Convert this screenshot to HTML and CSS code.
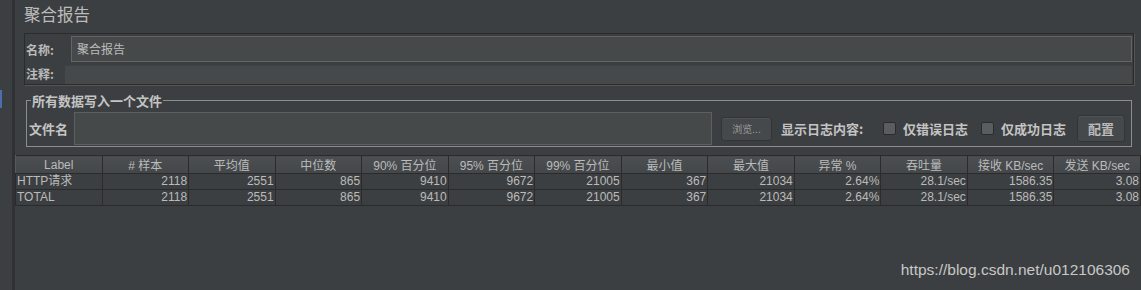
FILE: index.html
```html
<!DOCTYPE html>
<html lang="zh">

<head>
    <meta charset="UTF-8" />
    <meta name="viewport" content="width=device-width, initial-scale=1.0" />
    <title>聚合报告</title>
    <link rel="stylesheet" href="styles.css">
</head>

<body>
    <div class="app">
        <!-- 左侧树面板边缘 -->
        <div class="side">
            <span class="side-mark"></span>
        </div>
        <div class="main">
            <h1 class="title">聚合报告</h1>
            <!-- 名称 / 注释 -->
            <div class="info">
                <div class="info-row">
                    <label class="name-label">名称:</label>
                    <div class="field name-field">聚合报告</div>
                </div>
                <div class="info-row">
                    <label class="note-label">注释:</label>
                    <div class="field note-field"></div>
                </div>
            </div>
            <!-- 写入文件 -->
            <fieldset class="file-group">
                <legend>所有数据写入一个文件</legend>
                <div class="file-row">
                    <label class="file-label">文件名</label>
                    <div class="field file-field"></div>
                    <button class="btn btn-browse">浏览...</button>
                    <span class="log-title">显示日志内容:</span>
                    <span class="check"></span>
                    <span class="check-text">仅错误日志</span>
                    <span class="check"></span>
                    <span class="check-text">仅成功日志</span>
                    <button class="btn btn-config">配置</button>
                </div>
            </fieldset>
            <!-- 结果表格 -->
            <table class="result">
                <thead>
                    <tr>
                        <th>Label</th>
                        <th># 样本</th>
                        <th>平均值</th>
                        <th>中位数</th>
                        <th>90% 百分位</th>
                        <th>95% 百分位</th>
                        <th>99% 百分位</th>
                        <th>最小值</th>
                        <th>最大值</th>
                        <th>异常 %</th>
                        <th>吞吐量</th>
                        <th>接收 KB/sec</th>
                        <th>发送 KB/sec</th>
                    </tr>
                </thead>
                <tbody>
                    <tr>
                        <td class="label">HTTP请求</td>
                        <td>2118</td>
                        <td>2551</td>
                        <td>865</td>
                        <td>9410</td>
                        <td>9672</td>
                        <td>21005</td>
                        <td>367</td>
                        <td>21034</td>
                        <td>2.64%</td>
                        <td>28.1/sec</td>
                        <td>1586.35</td>
                        <td>3.08</td>
                    </tr>
                    <tr>
                        <td class="label">TOTAL</td>
                        <td>2118</td>
                        <td>2551</td>
                        <td>865</td>
                        <td>9410</td>
                        <td>9672</td>
                        <td>21005</td>
                        <td>367</td>
                        <td>21034</td>
                        <td>2.64%</td>
                        <td>28.1/sec</td>
                        <td>1586.35</td>
                        <td>3.08</td>
                    </tr>
                </tbody>
            </table>
            <div class="watermark">https://blog.csdn.net/u012106306</div>
        </div>
    </div>
</body>

</html>
```
FILE: styles.css
```css
* {
    margin: 0;
    padding: 0;
    box-sizing: border-box;
}

body {
    width: 1141px;
    height: 290px;
    overflow: hidden;
    background-color: #3c3f41;
    color: #bbbbbb;
    font-family: "Liberation Sans", "Noto Sans CJK SC", sans-serif;
    font-size: 12px;
}

.app {
    display: flex;
    height: 290px;
}

/* 
        左侧边缘
    */
.side {
    width: 15px;
    flex-shrink: 0;
    border-right: 3px solid #2f3133;
    background-color: #3c3f41;
}

.side-mark {
    display: block;
    width: 2px;
    height: 18px;
    margin-top: 90px;
    background-color: #4b6eaf;
}

.main {
    flex: 1;
    position: relative;
}

.title {
    margin: 4px 0 0 9px;
    font-family: "Noto Sans CJK SC", sans-serif;
    font-size: 16.5px;
    font-weight: normal;
    line-height: 20px;
    height: 29px;
    color: #bbbbbb;
}

/* 
        名称和注释
    */
.info {
    margin: 0 7px 0 9px;
    height: 52px;
    border: 1px solid #2b2b2b;
    box-shadow: 1px 1px 0 #555555;
    padding: 2px 1px 0 1px;
}

.info-row {
    display: flex;
    align-items: center;
}

.info-row label {
    font-family: "Noto Sans CJK SC", sans-serif;
    font-size: 12px;
    font-weight: bold;
    color: #bbbbbb;
}

.name-label {
    width: 45px;
}

.note-label {
    width: 39px;
}

.field {
    background-color: #45494a;
    font-family: "Noto Sans CJK SC", sans-serif;
    font-size: 12px;
}

.name-field {
    flex: 1;
    height: 26px;
    line-height: 24px;
    padding-left: 5px;
    border: 1px solid #646464;
}

.note-field {
    flex: 1;
    height: 19px;
    margin-top: 3px;
    border-top: 1px solid #3f4244;
}

/* 
        写入文件
    */
.file-group {
    margin: 8px 9px 0 11px;
    border: 1px solid #8d8d8d;
    padding: 0 0 0 2px;
}

.file-group legend {
    margin-left: 2px;
    padding: 0 1px;
    font-family: "Noto Sans CJK SC", sans-serif;
    font-size: 13px;
    font-weight: bold;
    line-height: 15px;
    color: #c4c4c4;
}

.file-row {
    display: flex;
    align-items: center;
    height: 33px;
    margin: 4px 0 1px 0;
    font-family: "Noto Sans CJK SC", sans-serif;
    font-size: 13px;
    font-weight: bold;
    color: #c4c4c4;
    white-space: nowrap;
}

.file-row > * {
    flex-shrink: 0;
}

.file-label {
    width: 45px;
}

.file-row .file-field {
    flex: 0 1 638px;
    height: 33px;
    border: 1px solid #5e5e5e;
}

.btn {
    font-family: "Noto Sans CJK SC", sans-serif;
    background-color: #45494b;
    border: 1px solid #323435;
    border-radius: 3px;
    box-shadow: inset 0 1px 0 #4f5355;
    color: #bbbbbb;
}

.btn-browse {
    width: 51px;
    height: 24px;
    margin-left: 9px;
    font-size: 10px;
    font-weight: normal;
    color: #9a9a9a;
}

.log-title {
    width: 86px;
    margin-left: 9px;
}

.check {
    width: 13px;
    height: 13px;
    margin: 0 7px 0 16px;
    background-color: #5a5d5f;
    border: 1px solid #2b2b2b;
    border-radius: 2px;
}

.check + .check-text + .check {
    margin-left: 13px;
}

.btn-config {
    width: 48px;
    height: 27px;
    margin-left: 11px;
    font-size: 13px;
    font-weight: bold;
}

/* 
        结果表格
    */
.result {
    margin-top: 8px;
    width: 1126px;
    table-layout: fixed;
    border-collapse: collapse;
    border-top: 1px solid #2b2b2b;
}

.result th {
    height: 17px;
    padding: 0;
    font-weight: normal;
    font-size: 12px;
    color: #bbbbbb;
    text-align: center;
    background: linear-gradient(#4b4f51, #43474a);
    border-right: 1px solid #2b2b2b;
    border-left: 1px solid #55595b;
    border-bottom: 1px solid #2b2b2b;
    white-space: nowrap;
    overflow: hidden;
}

.result td {
    height: 16px;
    padding: 0 1px 0 0;
    font-size: 12px;
    line-height: 15px;
    text-align: right;
    color: #bbbbbb;
    border: 1px solid #2b2b2b;
    border-top: none;
    white-space: nowrap;
}

.result td.label {
    text-align: left;
    padding-left: 1px;
}

.watermark {
    position: absolute;
    right: 11px;
    bottom: 11px;
    font-size: 15.5px;
    color: #c8c8c8;
}
```
